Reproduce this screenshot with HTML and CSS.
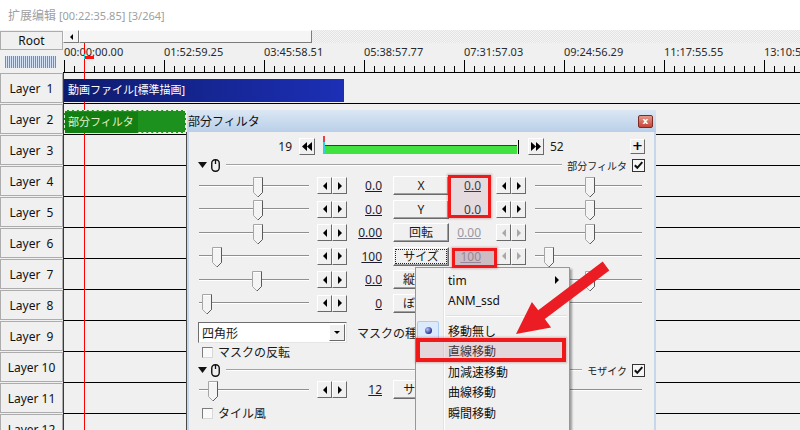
FILE: index.html
```html
<!DOCTYPE html>
<html lang="ja">
<head>
<meta charset="utf-8">
<title>拡張編集</title>
<link rel="stylesheet" href="styles.css">
</head>
<body>
<svg class="defs" width="0" height="0" aria-hidden="true">
  <symbol id="thumb" viewBox="0 0 11 21">
    <path d="M0.5 0.5H9.5V15.5L5 20L0.5 15.5Z" fill="#f4f4f4" stroke="#a6a6a6"/>
    <path d="M9.5 0.5V15.5L5 20" fill="none" stroke="#5a5a5a"/>
    <path d="M1.5 1.5H8.5" stroke="#fff"/>
  </symbol>
  <symbol id="mouse" viewBox="0 0 9 13">
    <rect x="0.75" y="0.75" width="7.5" height="11.5" rx="3.5" fill="none" stroke="#111" stroke-width="1.4"/>
    <path d="M4.5 1V5" stroke="#111" stroke-width="1.3"/>
  </symbol>
  <symbol id="tri" viewBox="0 0 9 6">
    <path d="M0 0H9L4.5 6Z" fill="#111"/>
  </symbol>
  <symbol id="check" viewBox="0 0 11 11">
    <path d="M1.8 5.2L4.3 7.8L9.3 2.2" fill="none" stroke="#111" stroke-width="2"/>
  </symbol>
</svg>

<div class="app">
  <div class="top-title"><span class="cjk">扩展编辑</span> [00:22:35.85] [3/264]</div>

  <div class="main">
    <div class="layer-col">
      <div class="root-btn">Root</div>
      <div class="stripe-wrap"><div class="stripes"></div></div>
      <div class="layer-btn">Layer  1</div>
      <div class="layer-btn">Layer  2</div>
      <div class="layer-btn">Layer  3</div>
      <div class="layer-btn">Layer  4</div>
      <div class="layer-btn">Layer  5</div>
      <div class="layer-btn">Layer  6</div>
      <div class="layer-btn">Layer  7</div>
      <div class="layer-btn">Layer  8</div>
      <div class="layer-btn">Layer  9</div>
      <div class="layer-btn">Layer 10</div>
      <div class="layer-btn">Layer 11</div>
      <div class="layer-btn">Layer 12</div>
    </div>

    <div class="track-area">
      <div class="hscroll">
        <div class="hs-arrow"><span class="tri-l"></span></div>
        <div class="hs-thumb"></div>
        <div class="hs-rest"></div>
      </div>
      <div class="ruler">
        <div class="ruler-labels">
          <span>00:00:00.00</span><span>01:52:59.25</span><span>03:45:58.51</span><span>05:38:57.77</span>
          <span>07:31:57.03</span><span>09:24:56.29</span><span>11:17:55.55</span><span>13:10:54.81</span>
        </div>
        <div class="ticks"></div>
      </div>
      <div class="rows">
        <div class="row"><div class="clip clip-blue">動画ファイル[標準描画]</div></div>
        <div class="row"><div class="clip clip-green"><span class="clip-label">部分フィルタ</span></div></div>
        <div class="row"></div>
        <div class="row"></div>
        <div class="row"></div>
        <div class="row"></div>
        <div class="row"></div>
        <div class="row"></div>
        <div class="row"></div>
        <div class="row"></div>
        <div class="row"></div>
        <div class="row"></div>
      </div>
      <div class="cursor"></div>
      <div class="cursor-mark"></div>
      <div class="cursor-cyan"></div>
    </div>
  </div>

  <div class="dlg">
    <div class="dlg-title"><span>部分フィルタ</span><span class="dlg-close">x</span></div>
    <div class="dlg-body">
      <div class="frame">
        <span class="fnum">19</span>
        <span class="navbtn"><svg width="10" height="9" viewBox="0 0 10 9"><path d="M5 0V9L0 4.5Z M10 0V9L5 4.5Z" fill="#000"/></svg></span>
        <span class="fbar"><span class="fgreen"></span><span class="fred"></span><span class="fcyan"></span><span class="fend"></span></span>
        <span class="navbtn nav-r"><svg width="10" height="9" viewBox="0 0 10 9"><path d="M0 0V9L5 4.5Z M5 0V9L10 4.5Z" fill="#000"/></svg></span>
        <span class="fnum2">52</span>
        <span class="plusbtn">+</span>
      </div>

      <div class="sec">
        <svg class="ic-tri"><use href="#tri"/></svg>
        <svg class="ic-mouse"><use href="#mouse"/></svg>
        <span class="sec-line"></span>
        <span class="sec-label">部分フィルタ</span>
        <span class="cb cb-on"><svg class="ic-check"><use href="#check"/></svg></span>
      </div>

      <div class="trows">
        <div class="trow">
          <div class="slider"><svg class="thumb" style="left:54px"><use href="#thumb"/></svg></div>
          <div class="spin"><span class="sb sb-l"></span><span class="sb sb-r"></span></div>
          <span class="val">0.0</span>
          <span class="pbtn">X</span>
          <span class="rval">0.0</span>
          <div class="spin rspin"><span class="sb sb-l"></span><span class="sb sb-r"></span></div>
          <div class="slider rslider"><svg class="thumb" style="left:50px"><use href="#thumb"/></svg></div>
        </div>
        <div class="trow">
          <div class="slider"><svg class="thumb" style="left:54px"><use href="#thumb"/></svg></div>
          <div class="spin"><span class="sb sb-l"></span><span class="sb sb-r"></span></div>
          <span class="val">0.0</span>
          <span class="pbtn">Y</span>
          <span class="rval">0.0</span>
          <div class="spin rspin"><span class="sb sb-l"></span><span class="sb sb-r"></span></div>
          <div class="slider rslider"><svg class="thumb" style="left:50px"><use href="#thumb"/></svg></div>
        </div>
        <div class="trow">
          <div class="slider"><svg class="thumb" style="left:54px"><use href="#thumb"/></svg></div>
          <div class="spin"><span class="sb sb-l"></span><span class="sb sb-r"></span></div>
          <span class="val">0.00</span>
          <span class="pbtn">回転</span>
          <span class="rval off">0.00</span>
          <div class="spin rspin off"><span class="sb sb-l"></span><span class="sb sb-r"></span></div>
          <div class="slider rslider"><svg class="thumb" style="left:50px"><use href="#thumb"/></svg></div>
        </div>
        <div class="trow">
          <div class="slider"><svg class="thumb" style="left:13px"><use href="#thumb"/></svg></div>
          <div class="spin"><span class="sb sb-l"></span><span class="sb sb-r"></span></div>
          <span class="val">100</span>
          <span class="pbtn focus"><span class="focus-ring">サイズ</span></span>
          <span class="rval off">100</span>
          <div class="spin rspin off"><span class="sb sb-l"></span><span class="sb sb-r"></span></div>
          <div class="slider rslider"><svg class="thumb" style="left:9px"><use href="#thumb"/></svg></div>
        </div>
        <div class="trow">
          <div class="slider"><svg class="thumb" style="left:53px"><use href="#thumb"/></svg></div>
          <div class="spin"><span class="sb sb-l"></span><span class="sb sb-r"></span></div>
          <span class="val">0.0</span>
          <span class="pbtn">縦横比</span>
          <span class="rval"></span>
          <div class="spin rspin"><span class="sb sb-l"></span><span class="sb sb-r"></span></div>
          <div class="slider rslider"><svg class="thumb" style="left:50px"><use href="#thumb"/></svg></div>
        </div>
        <div class="trow">
          <div class="slider"><svg class="thumb" style="left:3px"><use href="#thumb"/></svg></div>
          <div class="spin"><span class="sb sb-l"></span><span class="sb sb-r"></span></div>
          <span class="val">0</span>
          <span class="pbtn">ぼかし</span>
          <span class="rval"></span>
          <div class="spin rspin"><span class="sb sb-l"></span><span class="sb sb-r"></span></div>
          <div class="slider rslider"><svg class="thumb" style="left:3px"><use href="#thumb"/></svg></div>
        </div>
      </div>

      <div class="crow">
        <div class="combo"><span>四角形</span><span class="combo-btn"><span class="tri-d"></span></span></div>
        <span class="clabel">マスクの種類</span>
      </div>

      <div class="chk"><span class="box"></span><span class="chk-label">マスクの反転</span></div>

      <div class="sec sec2">
        <svg class="ic-tri"><use href="#tri"/></svg>
        <svg class="ic-mouse"><use href="#mouse"/></svg>
        <span class="sec-line"></span>
        <span class="sec-label">モザイク</span>
        <span class="cb cb-on"><svg class="ic-check"><use href="#check"/></svg></span>
      </div>

      <div class="trow trow2">
        <div class="slider"><svg class="thumb" style="left:9px"><use href="#thumb"/></svg></div>
        <div class="spin"><span class="sb sb-l"></span><span class="sb sb-r"></span></div>
        <span class="val">12</span>
        <span class="pbtn">サイズ</span>
        <span class="rval"></span>
        <div class="spin rspin"><span class="sb sb-l"></span><span class="sb sb-r"></span></div>
        <div class="slider rslider"><svg class="thumb" style="left:9px"><use href="#thumb"/></svg></div>
      </div>

      <div class="chk chk2"><span class="box"></span><span class="chk-label">タイル風</span></div>
    </div>
  </div>

  <div class="menu">
    <div class="mi"><span class="mi-ic"></span><span class="mi-t">tim</span><span class="mi-arrow"></span></div>
    <div class="mi"><span class="mi-ic"></span><span class="mi-t">ANM_ssd</span></div>
    <div class="msep"></div>
    <div class="mi"><span class="mi-ic radio"></span><span class="mi-t">移動無し</span></div>
    <div class="mi"><span class="mi-ic"></span><span class="mi-t">直線移動</span></div>
    <div class="mi"><span class="mi-ic"></span><span class="mi-t">加減速移動</span></div>
    <div class="mi"><span class="mi-ic"></span><span class="mi-t">曲線移動</span></div>
    <div class="mi"><span class="mi-ic"></span><span class="mi-t">瞬間移動</span></div>
  </div>

  <div class="hl hl-a"></div>
  <div class="hl hl-b"></div>
  <div class="hl hl-c"></div>

  <svg class="arrow" width="800" height="430" viewBox="0 0 800 430">
    <polygon points="602.7,261.6 538.2,310.3 531.9,301.9 516,334 551.1,327.5 544.8,319.1 609.3,270.4" fill="#ec1c24"/>
  </svg>
</div>
</body>
</html>
```
FILE: styles.css
```css
* { box-sizing: border-box; margin: 0; padding: 0; }
html, body { width: 800px; height: 430px; overflow: hidden; background: #fff; }
body {
  font-family: "Noto Sans", "Noto Sans CJK JP", sans-serif;
  font-size: 12px;
  color: #1a1a1a;
}
.defs { position: absolute; width: 0; height: 0; }
.app { position: relative; width: 800px; height: 430px; overflow: hidden; }

/* window title */
.top-title {
  height: 30px;
  padding: 6px 0 0 8px;
  color: #a0a0a0;
  font-size: 11px;
  line-height: 17px;
  white-space: pre;
}
.top-title .cjk { font-family: "Noto Sans CJK SC", sans-serif; font-size: 12px; }

.main { display: flex; height: 400px; background: #f0f0f0; }

/* layer column */
.layer-col { width: 63px; flex: none; }
.root-btn {
  margin-top: 1px;
  height: 19px;
  border: 1px solid #acacac;
  background: #f0f0f0;
  text-align: center;
  font-size: 12px;
  line-height: 17px;
  color: #111;
}
.stripe-wrap { height: 23px; padding: 6px 0 0 5px; }
.stripes {
  width: 51px;
  height: 12px;
  background: repeating-linear-gradient(90deg, #5e8fe0 0 1px, #d6e3f6 1px 2px);
}
.layer-btn {
  height: 30px;
  margin-bottom: 1px;
  border: 1px solid #acacac;
  background: #f0f0f0;
  text-align: center;
  line-height: 29px;
  white-space: pre;
  font-size: 12px;
  color: #111;
}

/* tracks */
.track-area { flex: 1; position: relative; }
.hscroll { height: 13px; display: flex; }
.hs-arrow, .hs-thumb {
  height: 13px;
  border: 1px solid;
  border-color: #fdfdfd #7c7c7c #7c7c7c #fdfdfd;
  background: #f5f5f5;
}
.hs-arrow { width: 16px; display: flex; align-items: center; justify-content: center; }
.tri-l { width: 0; height: 0; border-top: 3px solid transparent; border-bottom: 3px solid transparent; border-right: 3px solid #000; }
.hs-thumb { width: 233px; }
.hs-rest {
  flex: 1;
  background: repeating-conic-gradient(#e3e3e3 0 25%, #f5f5f5 0 50%) 0 0 / 2px 2px;
}
.ruler {
  height: 30px;
  position: relative;
  border-bottom: 1px solid #000;
}
.ruler-labels { display: flex; padding: 2px 0 0 1px; white-space: nowrap; }
.ruler-labels span { flex: none; width: 100px; font-size: 11px; line-height: 14px; color: #2a2a2a; }
.ticks {
  position: absolute;
  left: 0; right: 0; bottom: 0;
  height: 12px;
  background-image:
    repeating-linear-gradient(90deg, #000 0 1px, transparent 1px 100px),
    repeating-linear-gradient(90deg, #000 0 1px, transparent 1px 10px);
  background-size: 100% 12px, 100% 6px;
  background-position: 1px 100%, 1px 100%;
  background-repeat: no-repeat;
}
.row {
  height: 31px;
  border-bottom: 1px solid #000;
  border-left: 1px solid #3a3a3a;
  padding-top: 6px;
}
.clip {
  position: relative;
  z-index: 2;
  height: 23px;
  font-size: 11px;
  line-height: 22px;
  white-space: nowrap;
}
.clip-blue {
  width: 280px;
  padding-left: 4px;
  color: #fff;
  background: linear-gradient(90deg, #0e1b6c, #1c2fb6);
}
.clip-green {
  width: 122px;
  color: #e6efc8;
  background: #1d911d;
  border: 1px dashed #e8f0e0;
}
.clip-label { display: inline-block; width: 73px; padding-left: 3px; background: #137f13; height: 21px; line-height: 20px; }
.cursor { position: absolute; left: 21px; top: 13px; bottom: 0; width: 1px; background: #ff0000; z-index: 1; }
.cursor-mark { position: absolute; left: 22px; top: 26px; width: 9px; height: 3px; background: #ff1010; z-index: 1; }
.cursor-cyan { position: absolute; left: 21px; top: 24px; width: 1px; height: 5px; background: #1fd0d0; z-index: 1; }

/* dialog */
.dlg { position: absolute; left: 187px; top: 110px; width: 469px; height: 330px; z-index: 5; }
.dlg-title {
  height: 22px;
  display: flex;
  align-items: center;
  padding-left: 1px;
  background: linear-gradient(#dbe7f4, #b9cfe8);
  font-size: 12px;
  color: #111;
}
.dlg-close {
  margin-left: auto;
  margin-right: 3px;
  width: 15px;
  height: 13px;
  border: 1px solid #7d2b23;
  border-radius: 2px;
  background: linear-gradient(#e39a8c, #c6443a);
  color: #fff;
  font: bold 9px/10px "DejaVu Sans", sans-serif;
  text-align: center;
}
.dlg-body {
  height: 308px;
  background: #f0f0f0;
  border-left: 2px solid #c6d7eb;
  border-right: 2px solid #c6d7eb;
  padding-top: 6px;
  box-shadow: -1px 0 0 #4a4a4a;
}
.navbtn, .plusbtn, .sb, .pbtn, .combo-btn {
  border: 1px solid;
  border-color: #fff #6a6a6a #6a6a6a #fff;
  background: #f0f0f0;
}
.frame { display: flex; align-items: center; height: 17px; }
.fnum { width: 103px; text-align: right; font-size: 12px; line-height: 17px; }
.navbtn { width: 16px; height: 17px; margin-left: 7px; display: flex; align-items: center; justify-content: center; }
.fbar { margin-left: 8px; width: 197px; height: 17px; position: relative; }
.fgreen { position: absolute; left: 0; right: 3px; top: 7px; height: 9px; background: #3fe23f; border-top: 1px solid #3a3a3a; }
.fred { position: absolute; left: 0; top: -2px; width: 2px; height: 6px; background: #f03a4a; }
.fcyan { position: absolute; left: 0; top: 4px; width: 2px; height: 12px; background: #30d2da; }
.fend { position: absolute; right: 1px; top: 2px; width: 1px; height: 14px; background: #000; }
.nav-r { margin-left: 8px; }
.fnum2 { margin-left: 6px; line-height: 17px; }
.plusbtn {
  margin-left: auto;
  margin-right: 9px;
  width: 15px;
  height: 15px;
  font: bold 13px/12px "DejaVu Sans", sans-serif;
  text-align: center;
  color: #000;
}

.sec { display: flex; align-items: center; height: 14px; margin-top: 3px; padding: 0 9px; }
.ic-tri { width: 9px; height: 6px; }
.ic-mouse { width: 9px; height: 13px; margin-left: 4px; }
.sec-line { flex: 1; height: 2px; margin-left: 6px; border-top: 1px solid #a3a3a3; border-bottom: 1px solid #fff; }
.sec-label { margin-left: 5px; font-size: 10px; color: #222; }
.cb { width: 13px; height: 13px; margin-left: 5px; border: 1px solid #333; background: #f6f6f6; display: flex; }
.ic-check { width: 11px; height: 11px; }

.trows { margin-top: 2px; }
.trow { display: flex; align-items: center; height: 23.5px; padding-left: 10px; }
.slider { position: relative; flex: none; width: 110px; height: 2px; border-top: 1px solid #8f8f8f; border-bottom: 1px solid #fff; }
.thumb { position: absolute; top: -9px; width: 11px; height: 21px; }
.spin { display: flex; margin-left: 8px; flex: none; }
.sb { width: 15px; height: 17px; display: flex; align-items: center; justify-content: center; }
.sb::before { content: ""; width: 0; height: 0; border-top: 4px solid transparent; border-bottom: 4px solid transparent; }
.sb-l::before { border-right: 4px solid #000; }
.sb-r::before { border-left: 4px solid #000; }
.spin.off .sb-l::before { border-right-color: #a8a8a8; }
.spin.off .sb-r::before { border-left-color: #a8a8a8; }
.val { flex: none; width: 35px; text-align: right; text-decoration: underline; color: #1c1c30; font-size: 12px; }
.pbtn {
  flex: none;
  margin-left: 11px;
  width: 56px;
  height: 19px;
  text-align: center;
  line-height: 17px;
  font-size: 12px;
  box-shadow: inset -1px -1px 0 #a0a0a0;
  white-space: nowrap;
  overflow: hidden;
}
.focus { padding: 2px; line-height: 13px; }
.focus-ring { display: block; height: 13px; outline: 1px dotted #222; }
.rval { flex: none; width: 42px; text-align: right; padding-right: 10px; text-decoration: underline; color: #1c1c30; }
.rval.off { color: #9898a4; }
.rspin { margin-left: 5px; }
.rslider { margin-left: 9px; width: 107px; }

.crow { display: flex; align-items: center; height: 21px; margin-top: 7px; padding-left: 9px; }
.combo {
  width: 149px;
  height: 21px;
  display: flex;
  align-items: center;
  padding-left: 3px;
  background: #fff;
  border: 1px solid;
  border-color: #6e6e6e #e4e4e4 #e4e4e4 #6e6e6e;
}
.combo-btn { margin-left: auto; margin-right: 1px; width: 16px; height: 17px; display: flex; align-items: center; justify-content: center; }
.tri-d { width: 0; height: 0; border-left: 3px solid transparent; border-right: 3px solid transparent; border-top: 3px solid #000; }
.clabel { margin-left: 10px; white-space: nowrap; }

.chk { display: flex; align-items: center; height: 16px; margin-top: 1px; padding-left: 13px; }
.box { width: 11px; height: 11px; border: 1px solid; border-color: #7c7c7c #d8d8d8 #d8d8d8 #7c7c7c; background: #fafafa; }
.chk-label { margin-left: 5px; }
.sec2 { margin-top: 3px; }
.trow2 { margin-top: 1px; }
.chk2 { margin-top: 3.5px; }

/* popup menu */
.menu {
  position: absolute;
  left: 415px;
  top: 267px;
  width: 155px;
  height: 172px;
  padding-top: 2px;
  z-index: 10;
  border: 1px solid #979797;
  background-color: #f0f0f0;
  background-image: linear-gradient(90deg, transparent 27px, #e2e3e3 27px 28px, #fff 28px 29px, transparent 29px);
  box-shadow: 2px 2px 2px rgba(0, 0, 0, 0.35);
}
.mi { display: flex; align-items: center; height: 20.4px; padding-left: 1px; }
.mi-ic { flex: none; width: 22px; height: 20px; display: flex; align-items: center; justify-content: center; }
.mi-ic.radio { border: 1px solid #a9ccf3; border-radius: 2px; background: #dcebfb; }
.mi-ic.radio::before {
  content: "";
  width: 7px;
  height: 7px;
  border-radius: 50%;
  background: radial-gradient(circle at 35% 35%, #b8c2f4, #2b3592 70%);
}
.mi-t { margin-left: 9px; white-space: nowrap; color: #111; }
.mi-arrow { margin-left: auto; margin-right: 10px; width: 0; height: 0; border-left: 4px solid #000; border-top: 4px solid transparent; border-bottom: 4px solid transparent; }
.msep { height: 10px; margin: 0 2px 0 30px; background: linear-gradient(transparent 4px, #e0e0e0 4px 5px, #fff 5px 6px, transparent 6px); }

/* annotation overlays */
.hl { position: absolute; z-index: 11; border: 3px solid #f01818; box-shadow: 0 0 2px 1px rgba(120, 0, 0, 0.25); }
.hl-a { left: 448px; top: 175px; width: 43px; height: 43px; background: rgba(190, 140, 160, 0.22); }
.hl-b { left: 452px; top: 248px; width: 45px; height: 20px; background: rgba(150, 110, 130, 0.4); }
.hl-c { left: 416px; top: 338px; width: 150px; height: 24px; border-width: 4px; background: rgba(190, 140, 160, 0.25); }
.arrow { position: absolute; left: 0; top: 0; z-index: 12; pointer-events: none; }
```
